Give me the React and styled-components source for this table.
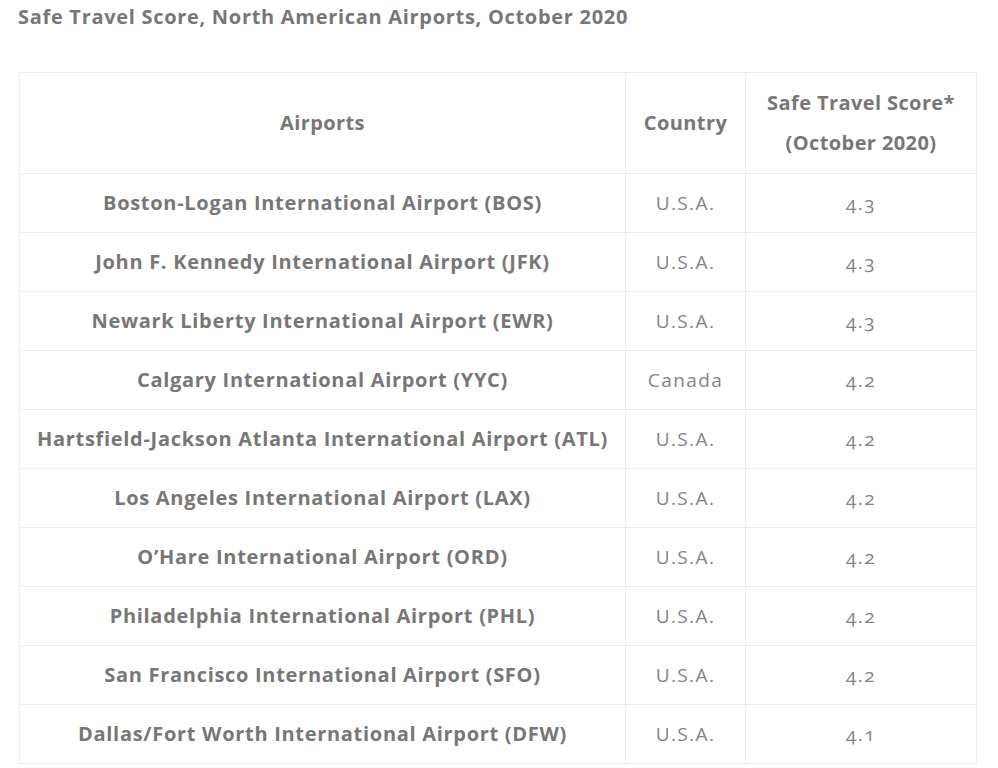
import React from "react";
import styled, { createGlobalStyle } from "styled-components";

const Global = createGlobalStyle`
  html, body { margin: 0; padding: 0; background: #fff; }
  body { font-family: "Open Sans", Lato, "Liberation Sans", sans-serif; color: #7a7a7a; }
`;

const Page = styled.div`
  padding: 5px 22px 0 19px;
`;

const Title = styled.h2`
  margin: 0 0 0 -1px;
  font-size: 20px;
  font-weight: 700;
  line-height: 24px;
  letter-spacing: 0.7px;
  color: #777;
`;

const Table = styled.table`
  margin-top: 43px;
  width: 957px;
  border-collapse: collapse;
  table-layout: fixed;
  border: 1px solid #ececec;
`;

const Th = styled.th`
  border: 1px solid #ececec;
  padding: 10px 2px;
  font-size: 20px;
  font-weight: 700;
  line-height: 40px;
  letter-spacing: 0.4px;
  color: #777;
  text-align: center;
`;

const Td = styled.td`
  border: 1px solid #ececec;
  padding: 9px 2px;
  height: 40px;
  font-size: ${(p) => (p.$bold ? "20px" : "19px")};
  font-weight: ${(p) => (p.$bold ? 700 : 400)};
  letter-spacing: ${(p) => (p.$bold ? "0.7px" : "1.4px")};
  line-height: 40px;
  color: ${(p) => (p.$bold ? "#777" : "#848484")};
  font-feature-settings: "onum" 1;
  text-align: center;
  white-space: nowrap;
`;

const rows = [
  ["Boston-Logan International Airport (BOS)", "U.S.A.", "4.3"],
  ["John F. Kennedy International Airport (JFK)", "U.S.A.", "4.3"],
  ["Newark Liberty International Airport (EWR)", "U.S.A.", "4.3"],
  ["Calgary International Airport (YYC)", "Canada", "4.2"],
  ["Hartsfield-Jackson Atlanta International Airport (ATL)", "U.S.A.", "4.2"],
  ["Los Angeles International Airport (LAX)", "U.S.A.", "4.2"],
  ["O’Hare International Airport (ORD)", "U.S.A.", "4.2"],
  ["Philadelphia International Airport (PHL)", "U.S.A.", "4.2"],
  ["San Francisco International Airport (SFO)", "U.S.A.", "4.2"],
  ["Dallas/Fort Worth International Airport (DFW)", "U.S.A.", "4.1"],
];

export default function App() {
  return (
    <>
      <Global />
      <Page>
        <Title>Safe Travel Score, North American Airports, October 2020</Title>
        <Table>
          <colgroup>
            <col style={{ width: 606 }} />
            <col style={{ width: 120 }} />
            <col style={{ width: 231 }} />
          </colgroup>
          <thead>
            <tr>
              <Th>Airports</Th>
              <Th>Country</Th>
              <Th>
                Safe Travel Score*
                <br />
                (October 2020)
              </Th>
            </tr>
          </thead>
          <tbody>
            {rows.map(([a, c, s]) => (
              <tr key={a}>
                <Td $bold>{a}</Td>
                <Td>{c}</Td>
                <Td>{s}</Td>
              </tr>
            ))}
          </tbody>
        </Table>
      </Page>
    </>
  );
}
